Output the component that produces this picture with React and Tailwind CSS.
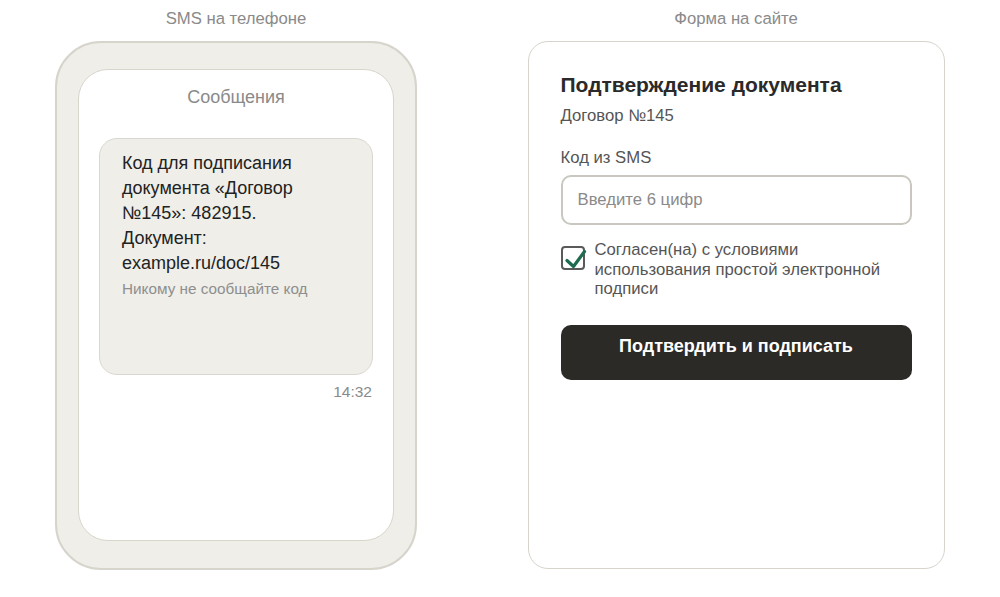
import React from 'react';

const font = { fontFamily: '"Liberation Sans", Arial, sans-serif' };

function Phone() {
  return (
    <div className="w-[362px] h-[529px] rounded-[46px] border-2 border-[#d6d4cb] bg-[#efeee9] px-[21px] pt-[26px] pb-[27px]">
      <div className="h-full rounded-[30px] border border-[#d8d6cc] bg-white px-[20px] pt-[16px] flex flex-col">
        <div className="text-center text-[18px] leading-[22px] text-[#8a8a8a]">Сообщения</div>

        {/* incoming message */}
        <div className="mt-[30px] h-[237px] rounded-[18px] border border-[#d9d7cf] bg-[#efeee9] px-[22px] pt-[12px]">
          <p className="text-[18px] leading-[25px] text-[#222]">
            Код для подписания<br />
            документа «Договор<br />
            №145»: 482915.<br />
            Документ:<br />
            example.ru/doc/145
          </p>
          <p className="mt-[3px] text-[15.3px] leading-[20px] text-[#8e8e8e]">Никому не сообщайте код</p>
        </div>
        <div className="mt-[8px] pr-[1px] text-right text-[15.5px] leading-[18px] text-[#8a8a8a]">14:32</div>
      </div>
    </div>
  );
}

function SignForm() {
  return (
    <div className="w-[417px] h-[528px] rounded-[20px] border-[1.5px] border-[#d6d4cb] bg-white px-[32px] pt-[31px]">
      <h2 className="text-[21px] leading-[24px] font-bold text-[#2a2a2a]">Подтверждение документа</h2>
      <div className="mt-[9px] text-[16.7px] leading-[20px] text-[#555]">Договор №145</div>

      <div className="mt-[22px] text-[16.7px] leading-[20px] text-[#555]">Код из SMS</div>
      <div className="mt-[7px] h-[50px] rounded-[10px] border-2 border-[#c9c7bf] px-[15px] flex items-center text-[16.7px] text-[#8a8a8a]">
        Введите 6 цифр
      </div>

      <div className="mt-[15px] flex items-start gap-[10px]">
        <div className="mt-[6px] w-[24px] h-[24px] shrink-0 rounded-[4px] border-2 border-[#5a5a5a] relative">
          <svg className="absolute left-[1px] -top-[1px] overflow-visible" width="24" height="24" viewBox="0 0 24 24">
            <path d="M3 13.5 L9.5 19.5 L20.5 4.5" fill="none" stroke="#1f6b4f" strokeWidth="3.2" strokeLinecap="round" strokeLinejoin="round" />
          </svg>
        </div>
        <p className="text-[16.7px] leading-[19.5px] text-[#555]">
          Согласен(на) с условиями<br />
          использования простой электронной<br />
          подписи
        </p>
      </div>

      <button className="mt-[26px] w-full h-[55px] rounded-[10px] bg-[#2b2a27] pt-[10px] flex justify-center items-start text-[18px] leading-[22px] font-bold text-white">
        Подтвердить и подписать
      </button>
    </div>
  );
}

export default function App() {
  return (
    <div className="w-[1000px] h-[597px] bg-white flex gap-[28px] pt-[9px]" style={font}>
      <div className="w-[472px] flex flex-col items-center">
        <div className="text-[16.7px] leading-[20px] text-[#8a8a8a] mb-[12px]">SMS на телефоне</div>
        <Phone />
      </div>
      <div className="w-[472px] flex flex-col items-center">
        <div className="text-[16.7px] leading-[20px] text-[#8a8a8a] mb-[12px]">Форма на сайте</div>
        <SignForm />
      </div>
    </div>
  );
}
